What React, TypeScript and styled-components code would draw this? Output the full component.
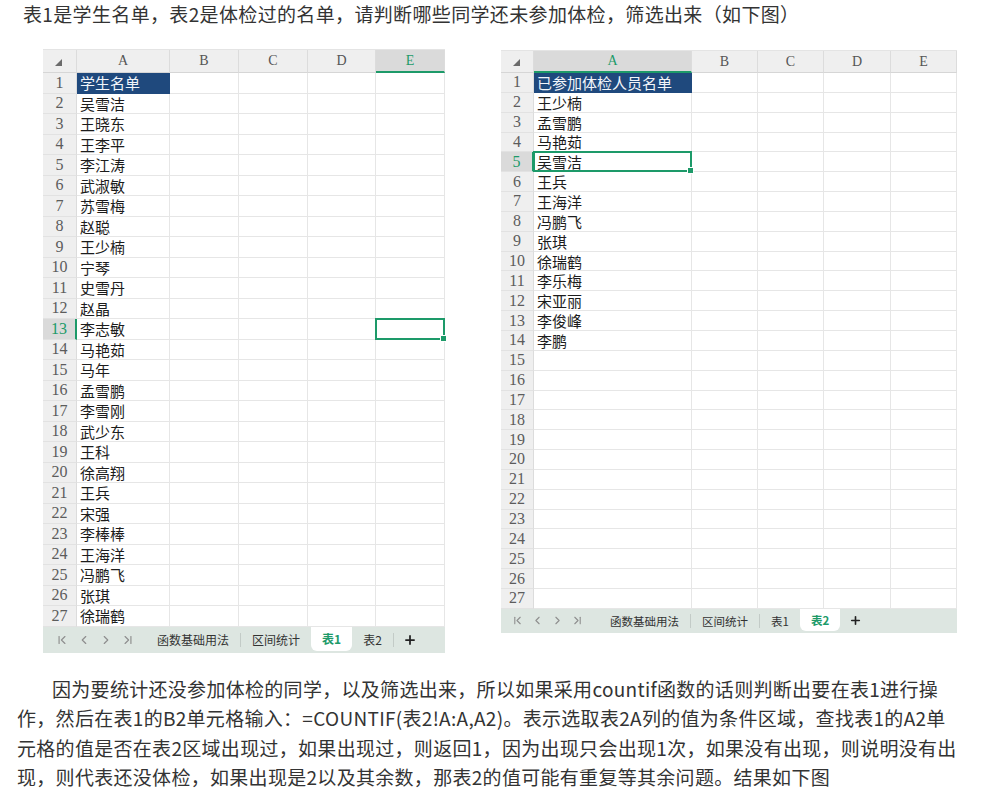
import React from 'react';
import styled, { createGlobalStyle, css } from 'styled-components';
import { ChevronFirst, ChevronLeft, ChevronRight, ChevronLast, Plus } from 'lucide-react';

const GREEN = '#1d9a69';

const GlobalStyle = createGlobalStyle`
  html, body { margin: 0; padding: 0; background: #fff; }
  body { font-family: "Noto Sans CJK SC", "Noto Sans", sans-serif; color: #333; }
`;

const Page = styled.div`
  width: 1006px;
  height: 801px;
  overflow: hidden;
  display: flex;
  flex-direction: column;
`;

const Intro = styled.p`
  margin: 0;
  padding-left: 23px;
  font-size: 19px;
  line-height: 28px;
  height: 30px;
  letter-spacing: 0.35px;
  white-space: nowrap;
  color: #333;
`;

const SheetsRow = styled.div`
  display: flex;
  align-items: flex-start;
  gap: 56px;
  padding-left: 43px;
  margin-top: 19px;
`;

const Sheet = styled.div<{ $width: number; $top: number }>`
  width: ${p => p.$width}px;
  margin-top: ${p => p.$top}px;
  display: flex;
  flex-direction: column;
`;

const Grid = styled.div<{ $cols: string; $header: number; $row: number; $rows: number }>`
  display: grid;
  grid-template-columns: ${p => p.$cols};
  grid-template-rows: ${p => p.$header}px repeat(${p => p.$rows}, ${p => p.$row}px);
  border-top: 1px solid #e4e4e4;
`;

const Corner = styled.div`
  background: #efefef;
  border-right: 1px solid #dcdcdc;
  border-bottom: 1px solid #d6d6d6;
  box-sizing: border-box;
  display: flex;
  align-items: center;
  justify-content: center;
  padding: 2px 2px 0 0;
`;

const ColHead = styled.div<{ $active?: boolean }>`
  box-sizing: border-box;
  background: #efefef;
  border-right: 1px solid #dcdcdc;
  border-bottom: 1px solid #d6d6d6;
  display: flex;
  align-items: center;
  justify-content: center;
  font-family: "Liberation Serif", "DejaVu Serif", serif;
  font-size: 14px;
  color: #555;
  ${p =>
    p.$active &&
    css`
      background: #dadada;
      color: ${GREEN};
      border-bottom: 2px solid ${GREEN};
    `}
`;

const RowHead = styled.div<{ $active?: boolean }>`
  box-sizing: border-box;
  background: #efefef;
  border-right: 1px solid #dcdcdc;
  border-bottom: 1px solid #e2e2e2;
  display: flex;
  align-items: center;
  justify-content: center;
  font-family: "Liberation Serif", "DejaVu Serif", serif;
  font-size: 16px;
  color: #5c5c5c;
  ${p =>
    p.$active &&
    css`
      background: #dadada;
      color: ${GREEN};
      border-right: 2px solid ${GREEN};
    `}
`;

const Cell = styled.div<{ $title?: boolean; $selected?: boolean }>`
  position: relative;
  box-sizing: border-box;
  border-right: 1px solid #e6e6e6;
  border-bottom: 1px solid #e6e6e6;
  display: flex;
  align-items: center;
  padding-left: 3px;
  font-size: 15px;
  color: #1c1c1c;
  white-space: nowrap;
  ${p =>
    p.$title &&
    css`
      background: #1f497d;
      color: #f2f5fa;
      border-color: #1f497d;
    `}
  ${p =>
    p.$selected &&
    css`
      &::after {
        content: '';
        position: absolute;
        left: -1px;
        top: -1px;
        right: -1px;
        bottom: -1px;
        border: 2px solid ${GREEN};
        pointer-events: none;
      }
      &::before {
        content: '';
        position: absolute;
        right: -3px;
        bottom: -3px;
        width: 5px;
        height: 5px;
        background: ${GREEN};
        border: 1px solid #fff;
        z-index: 1;
      }
    `}
`;

const TabBar = styled.div<{ $height: number; $font: number; $pad: number }>`
  height: ${p => p.$height}px;
  background: #dde6e1;
  display: flex;
  align-items: stretch;
  padding-left: ${p => p.$pad}px;
  font-size: ${p => p.$font}px;
  color: #333;
`;

const Nav = styled.div<{ $gap: number; $after: number }>`
  display: flex;
  align-items: center;
  gap: ${p => p.$gap}px;
  margin-right: ${p => p.$after}px;
  color: #8e8e8e;
`;

const Tab = styled.div<{ $active?: boolean; $pad: number }>`
  display: flex;
  align-items: center;
  padding: 0 ${p => p.$pad}px;
  white-space: nowrap;
  ${p =>
    p.$active &&
    css`
      background: #fff;
      color: ${GREEN};
      font-weight: bold;
      border-radius: 0 0 6px 6px;
      margin-bottom: 2px;
    `}
`;

const Separator = styled.div`
  align-self: center;
  width: 1px;
  height: 14px;
  background: #c3cbc7;
`;

const AddTab = styled.div`
  display: flex;
  align-items: center;
  padding: 0 8px 0 9px;
  color: #222;
`;

const Paragraph = styled.p`
  margin: 21px 0 0;
  padding-left: 17px;
  font-size: 19px;
  line-height: 29.5px;
  text-indent: 35px;
  letter-spacing: 0.3px;
  color: #333;
  white-space: nowrap;
`;

type SheetConfig = {
  width: number;
  top: number;
  rowHead: number;
  cols: number[];
  header: number;
  row: number;
  tabH: number;
  tabFont: number;
  tabPad: number;
  barPad: number;
  navGap: number;
  navAfter: number;
  iconSize: number;
  data: string[];
  selected: { row: number; col: number };
  activeTab: number;
};

const LETTERS = ['A', 'B', 'C', 'D', 'E'];
const TABS = ['函数基础用法', '区间统计', '表1', '表2'];

const CornerMark = () => (
  <svg width="7" height="7" viewBox="0 0 7 7">
    <polygon points="7,0 7,7 0,7" fill="#6b6b6b" />
  </svg>
);

const SpreadSheet: React.FC<{ c: SheetConfig }> = ({ c }) => {
  const rows = Array.from({ length: 27 }, (_, i) => i + 1);
  const colsTemplate = `${c.rowHead}px ${c.cols.map(w => `${w}px`).join(' ')}`;
  return (
    <Sheet $width={c.width} $top={c.top}>
      <Grid $cols={colsTemplate} $header={c.header} $row={c.row} $rows={27}>
        <Corner>
          <CornerMark />
        </Corner>
        {LETTERS.map((l, ci) => (
          <ColHead key={l} $active={ci === c.selected.col}>
            {l}
          </ColHead>
        ))}
        {rows.map(r => (
          <React.Fragment key={r}>
            <RowHead $active={r === c.selected.row}>{r}</RowHead>
            {LETTERS.map((l, ci) => (
              <Cell
                key={l}
                $title={r === 1 && ci === 0}
                $selected={r === c.selected.row && ci === c.selected.col}
              >
                {ci === 0 ? c.data[r - 1] ?? '' : ''}
              </Cell>
            ))}
          </React.Fragment>
        ))}
      </Grid>
      <TabBar $height={c.tabH} $font={c.tabFont} $pad={c.barPad}>
        <Nav $gap={c.navGap} $after={c.navAfter}>
          <ChevronFirst size={c.iconSize} strokeWidth={2} />
          <ChevronLeft size={c.iconSize} strokeWidth={2} />
          <ChevronRight size={c.iconSize} strokeWidth={2} />
          <ChevronLast size={c.iconSize} strokeWidth={2} />
        </Nav>
        {TABS.map((t, i) => {
          const isActive = i === c.activeTab;
          const next = i + 1 < TABS.length ? i + 1 === c.activeTab : false;
          return (
            <React.Fragment key={t}>
              <Tab $active={isActive} $pad={c.tabPad}>
                {t}
              </Tab>
              {!isActive && !next && <Separator />}
            </React.Fragment>
          );
        })}
        <AddTab>
          <Plus size={c.iconSize} strokeWidth={3} />
        </AddTab>
      </TabBar>
    </Sheet>
  );
};

const LEFT_DATA = [
  '学生名单', '吴雪洁', '王晓东', '王李平', '李江涛', '武淑敏', '苏雪梅', '赵聪', '王少楠',
  '宁琴', '史雪丹', '赵晶', '李志敏', '马艳茹', '马年', '孟雪鹏', '李雪刚', '武少东', '王科',
  '徐高翔', '王兵', '宋强', '李棒棒', '王海洋', '冯鹏飞', '张琪', '徐瑞鹤',
];

const RIGHT_DATA = [
  '已参加体检人员名单', '王少楠', '孟雪鹏', '马艳茹', '吴雪洁', '王兵', '王海洋', '冯鹏飞',
  '张琪', '徐瑞鹤', '李乐梅', '宋亚丽', '李俊峰', '李鹏',
];

const LEFT: SheetConfig = {
  width: 402,
  top: 0,
  rowHead: 34,
  cols: [93, 69, 69, 68, 69],
  header: 23,
  row: 20.5,
  tabH: 26,
  tabFont: 12,
  tabPad: 11,
  barPad: 12,
  navGap: 8,
  navAfter: 11,
  iconSize: 14,
  data: LEFT_DATA,
  selected: { row: 13, col: 4 },
  activeTab: 2,
};

const RIGHT: SheetConfig = {
  width: 456,
  top: 1,
  rowHead: 33,
  cols: [158, 66, 66, 67, 66],
  header: 22,
  row: 19.85,
  tabH: 24,
  tabFont: 11.5,
  tabPad: 11,
  barPad: 10,
  navGap: 7,
  navAfter: 15,
  iconSize: 13,
  data: RIGHT_DATA,
  selected: { row: 5, col: 0 },
  activeTab: 3,
};

export default function App() {
  return (
    <Page>
      <GlobalStyle />
      <Intro>表1是学生名单，表2是体检过的名单，请判断哪些同学还未参加体检，筛选出来（如下图）</Intro>
      <SheetsRow>
        <SpreadSheet c={LEFT} />
        <SpreadSheet c={RIGHT} />
      </SheetsRow>
      <Paragraph>
        因为要统计还没参加体检的同学，以及筛选出来，所以如果采用countif函数的话则判断出要在表1进行操
        <br />
        作，然后在表1的B2单元格输入：=COUNTIF(表2!A:A,A2)。表示选取表2A列的值为条件区域，查找表1的A2单
        <br />
        元格的值是否在表2区域出现过，如果出现过，则返回1，因为出现只会出现1次，如果没有出现，则说明没有出
        <br />
        现，则代表还没体检，如果出现是2以及其余数，那表2的值可能有重复等其余问题。结果如下图
      </Paragraph>
    </Page>
  );
}
